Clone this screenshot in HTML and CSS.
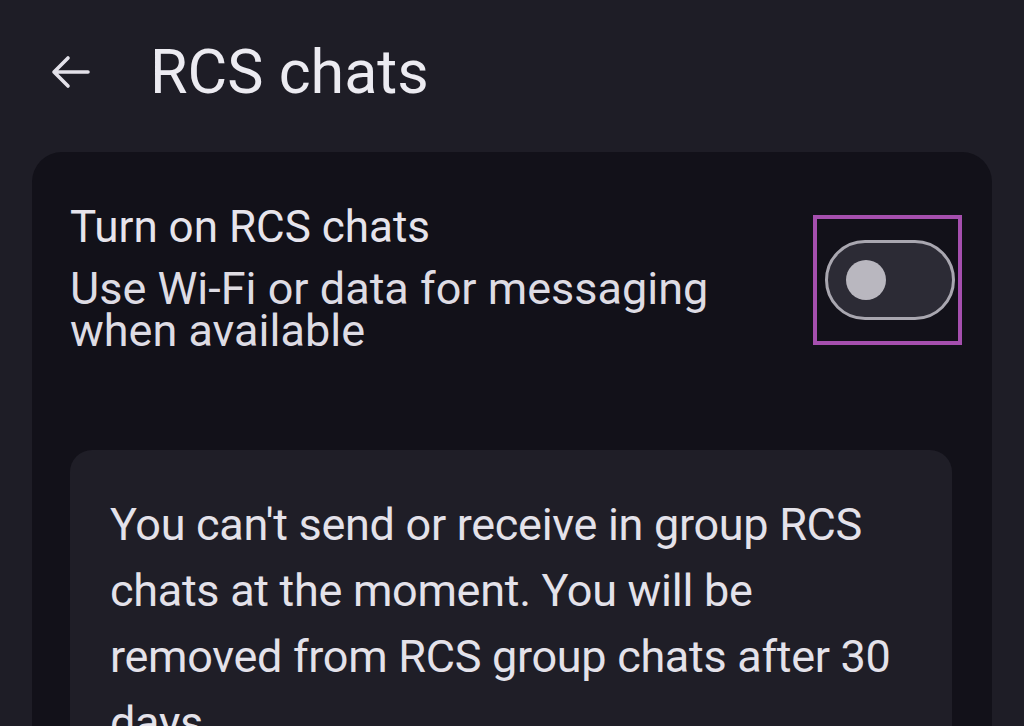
FILE: index.html
```html
<!DOCTYPE html>
<html>
<head>
<meta charset="utf-8">
<link rel="stylesheet" href="styles.css">
</head>
<body>
<header class="topbar">
  <svg class="back" width="44" height="44" viewBox="0 0 44 44" aria-hidden="true">
    <path d="M40 22 H6 M20 8 L6 22 L20 36" fill="none" stroke="#e3e1e9" stroke-width="3.6" stroke-linecap="round" stroke-linejoin="round"/>
  </svg>
  <h1 class="title">RCS chats</h1>
</header>
<main class="card">
  <div class="setting">
    <div class="texts">
      <div class="label">Turn on RCS chats</div>
      <div class="desc">Use Wi-Fi or data for messaging<br>when available</div>
    </div>
    <div class="toggle-wrap">
      <div class="toggle"><div class="knob"></div></div>
      <div class="highlight"></div>
    </div>
  </div>
  <div class="notice">
    <p>You can't send or receive in group RCS<br>chats at the moment. You will be<br>removed from RCS group chats after 30<br>days</p>
  </div>
</main>
</body>
</html>
```

FILE: styles.css
```css
html, body {
  margin: 0;
  height: 100%;
  overflow: hidden;
}
body {
  background: #1e1d26;
  color: #e6e4ec;
  font-family: Roboto, "Liberation Sans", sans-serif;
}
.topbar {
  height: 152px;
  display: flex;
  align-items: center;
  padding-left: 48px;
  box-sizing: border-box;
  padding-bottom: 8px;
}
.back {
  display: block;
  flex: none;
}
.title {
  margin: 0 0 0 58px;
  font-weight: 400;
  font-size: 61px;
  line-height: 70px;
  color: #ecebf1;
}
.card {
  margin: 0 32px;
  background: #121119;
  border-radius: 30px 30px 0 0;
  height: 600px;
  padding: 50px 38px 0 38px;
  box-sizing: border-box;
}
.setting {
  display: flex;
  justify-content: space-between;
  align-items: flex-start;
  height: 248px;
}
.label {
  font-size: 44px;
  line-height: 50px;
}
.desc {
  font-size: 45px;
  line-height: 42px;
  margin-top: 16px;
  color: #dedce4;
}
.toggle-wrap {
  position: relative;
  margin-top: 38px;
  margin-right: -1px;
}
.toggle {
  width: 130px;
  height: 80px;
  box-sizing: border-box;
  border: 3px solid #a9a7b0;
  border-radius: 40px;
  background: #2c2b35;
  display: flex;
  align-items: center;
  padding-left: 18px;
}
.knob {
  width: 40px;
  height: 40px;
  border-radius: 50%;
  background: #b9b7bf;
}
.highlight {
  position: absolute;
  left: -12px;
  top: -25px;
  width: 149px;
  height: 130px;
  box-sizing: border-box;
  border: 4px solid #a54fae;
}
.notice {
  background: #1f1e27;
  border-radius: 22px 22px 0 0;
  height: 400px;
  padding: 42px 20px 0 40px;
  margin-right: 2px;
}
.notice p {
  margin: 0;
  font-size: 45px;
  line-height: 66px;
  letter-spacing: -0.3px;
  white-space: nowrap;
  color: #e4e2ea;
}
```
